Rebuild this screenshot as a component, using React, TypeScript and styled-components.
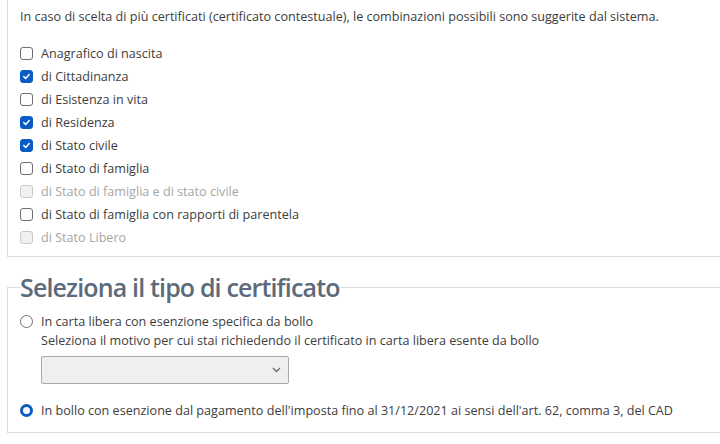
import React from 'react';
import styled, { createGlobalStyle } from 'styled-components';

const GlobalStyle = createGlobalStyle`
    html, body {
        margin: 0;
        padding: 0;
        background: #ffffff;
        overflow: hidden;
    }
    body {
        font-family: "Open Sans", "Noto Sans", sans-serif;
        color: #3d3d3d;
    }
`;

const Page = styled.div`
    width: 740px;
    padding-left: 7px;
`;

const OptionsBox = styled.div`
    border-left: 1px solid #dcdcdc;
    border-bottom: 1px solid #dcdcdc;
    padding: 8px 12px 10px 12px;
`;

const Intro = styled.p`
    margin: 0 0 18px 0;
    font-size: 12.6px;
    line-height: 18px;
`;

const OptionList = styled.div`
    display: flex;
    flex-direction: column;
    gap: 5px;
`;

const Row = styled.label<{ disabled?: boolean }>`
    display: flex;
    align-items: center;
    gap: 8px;
    height: 18px;
    font-size: 12.6px;
    color: ${p => (p.disabled ? '#a6a6a6' : '#3d3d3d')};
`;

const Box = styled.span<{ checked?: boolean; disabled?: boolean }>`
    width: 11px;
    height: 11px;
    border-radius: 3px;
    border: 1px solid ${p => (p.checked ? '#0a5bc4' : p.disabled ? '#c9c9c9' : '#6e6e6e')};
    background: ${p => (p.checked ? '#0a5bc4' : p.disabled ? '#f1f1f1' : '#ffffff')};
    display: flex;
    align-items: center;
    justify-content: center;
    flex-shrink: 0;
`;

const TypeFieldset = styled.fieldset`
    margin: 14px 0 0 0;
    border: 1px solid #dcdcdc;
    border-right: none;
    padding: 9px 12px 13px 12px;
`;

const Legend = styled.legend`
    padding: 0;
    font-size: 25px;
    line-height: 32px;
    font-weight: 600;
    color: #5b6b7b;
    letter-spacing: -0.85px;
`;

const RadioRow = styled.label`
    display: flex;
    align-items: center;
    gap: 8px;
    height: 18px;
    font-size: 12.6px;
`;

const Radio = styled.span<{ checked?: boolean }>`
    width: ${p => (p.checked ? '7px' : '11px')};
    height: ${p => (p.checked ? '7px' : '11px')};
    border-radius: 50%;
    border: ${p => (p.checked ? '3px solid #0a5bc4' : '1px solid #6e6e6e')};
    background: #ffffff;
    flex-shrink: 0;
`;

const Group = styled.div`
    display: flex;
    flex-direction: column;
    padding-left: 21px;
`;

const Hint = styled.div`
    font-size: 12.6px;
    line-height: 18px;
    margin-top: 2px;
`;

const Select = styled.div`
    margin-top: 6px;
    width: 248px;
    height: 28px;
    box-sizing: border-box;
    border: 1px solid #a9a9a9;
    border-radius: 2px;
    background: #efefef;
    display: flex;
    align-items: center;
    justify-content: flex-end;
    padding-right: 7px;
`;

const Spacer = styled.div`
    height: 17px;
`;

const Check = () => (
    <svg width="9" height="9" viewBox="0 0 9 9">
        <path d="M1.8 4.6 L3.7 6.4 L7.2 2.6" fill="none" stroke="#fff" strokeWidth="1.5" strokeLinecap="round" strokeLinejoin="round" />
    </svg>
);

const Chevron = () => (
    <svg width="9" height="6" viewBox="0 0 9 6">
        <path d="M1 1 L4.5 4.5 L8 1" fill="none" stroke="#6a6a6a" strokeWidth="1.3" />
    </svg>
);

const options = [
    { label: 'Anagrafico di nascita' },
    { label: 'di Cittadinanza', checked: true },
    { label: 'di Esistenza in vita' },
    { label: 'di Residenza', checked: true },
    { label: 'di Stato civile', checked: true },
    { label: 'di Stato di famiglia' },
    { label: 'di Stato di famiglia e di stato civile', disabled: true },
    { label: 'di Stato di famiglia con rapporti di parentela' },
    { label: 'di Stato Libero', disabled: true },
];

export default function App() {
    return (
        <Page>
            <GlobalStyle />
            <OptionsBox>
                <Intro>
                    In caso di scelta di più certificati (certificato contestuale), le combinazioni possibili sono suggerite dal sistema.
                </Intro>
                <OptionList>
                    {options.map(o => (
                        <Row key={o.label} disabled={o.disabled}>
                            <Box checked={o.checked} disabled={o.disabled}>
                                {o.checked && <Check />}
                            </Box>
                            {o.label}
                        </Row>
                    ))}
                </OptionList>
            </OptionsBox>
            <TypeFieldset>
                <Legend>Seleziona il tipo di certificato</Legend>
                <RadioRow>
                    <Radio />
                    In carta libera con esenzione specifica da bollo
                </RadioRow>
                <Group>
                    <Hint>Seleziona il motivo per cui stai richiedendo il certificato in carta libera esente da bollo</Hint>
                    <Select>
                        <Chevron />
                    </Select>
                </Group>
                <Spacer />
                <RadioRow>
                    <Radio checked />
                    In bollo con esenzione dal pagamento dell'imposta fino al 31/12/2021 ai sensi dell'art. 62, comma 3, del CAD
                </RadioRow>
            </TypeFieldset>
        </Page>
    );
}
